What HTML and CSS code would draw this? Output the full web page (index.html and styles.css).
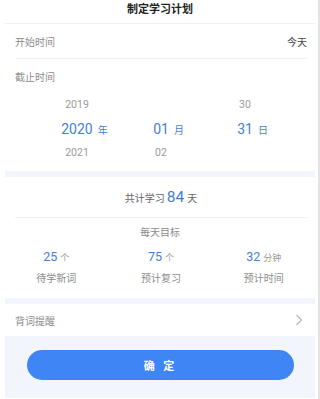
FILE: index.html
```html
<!DOCTYPE html>
<html lang="zh-CN">
<head>
    <meta charset="UTF-8">
    <meta name="viewport" content="width=device-width, initial-scale=1.0">
    <title>制定学习计划</title>
    <link rel="stylesheet" href="styles.css">
</head>
<body>
    <div class="page">
        <header class="title">制定学习计划</header>

        <div class="row row-start">
            <span class="label">开始时间</span>
            <span class="value">今天</span>
        </div>
        <div class="row row-end">
            <span class="label">截止时间</span>
        </div>

        <div class="picker">
            <div class="picker-row r1">
                <span class="cell">2019</span>
                <span class="cell"></span>
                <span class="cell">30</span>
            </div>
            <div class="picker-row r2">
                <span class="cell on">2020<em>年</em></span>
                <span class="cell on">01<em>月</em></span>
                <span class="cell on">31<em>日</em></span>
            </div>
            <div class="picker-row r3">
                <span class="cell">2021</span>
                <span class="cell">02</span>
                <span class="cell"></span>
            </div>
        </div>

        <div class="band"></div>

        <div class="total">共计学习<b>84</b>天</div>
        <div class="goal-title">每天目标</div>
        <div class="goals">
            <div class="goal">
                <div class="num">25<em>个</em></div>
                <div class="name">待学新词</div>
            </div>
            <div class="goal">
                <div class="num">75<em>个</em></div>
                <div class="name">预计复习</div>
            </div>
            <div class="goal">
                <div class="num">32<em>分钟</em></div>
                <div class="name">预计时间</div>
            </div>
        </div>

        <div class="band"></div>

        <div class="row row-remind">
            <span class="label">背词提醒</span>
            <svg class="chevron" width="8" height="12" viewBox="0 0 8 12">
                <path d="M1.5 1l5 5-5 5" fill="none" stroke="#b5b5b5" stroke-width="1.1"/>
            </svg>
        </div>

        <div class="footer">
            <button class="ok">确 定</button>
        </div>
    </div>
</body>
</html>
```

FILE: styles.css
```css
* {
    padding: 0;
    margin: 0;
    box-sizing: border-box;
    font-family: Roboto, "Noto Sans CJK SC", sans-serif;
}
body {
    background-color: #fff;
    width: 320px;
    height: 399px;
    border-right: 2px solid #e4e4e4;
    overflow: hidden;
}
.page {
    margin: 0 3px 0 5px;
}
.title {
    height: 24px;
    line-height: 20px;
    text-align: center;
    font-size: 11px;
    font-weight: bold;
    color: #222;
    border-bottom: 1px solid #f0f0f0;
}
.row {
    display: flex;
    align-items: center;
    justify-content: space-between;
    margin: 0 8px 0 10px;
}
.row-start {
    height: 35px;
    border-bottom: 1px solid #f0f0f0;
}
.row-end {
    height: 34px;
}
.label {
    font-size: 10px;
    color: #8c8c8c;
}
.value {
    font-size: 10px;
    color: #444;
}

.picker-row {
    display: flex;
    padding-left: 30px;
}
.picker-row .cell {
    width: 84px;
    text-align: center;
    font-size: 10.5px;
    color: #9a9a9a;
}
.r1 { height: 24px; line-height: 24px; }
.r2 { height: 25px; line-height: 25px; }
.r3 { height: 22px; line-height: 22px; margin-bottom: 7px; }
.picker-row .on {
    font-size: 14px;
    color: #3f7fd8;
    padding-left: 15px;
}
.picker-row .on em {
    font-style: normal;
    font-size: 10px;
    margin-left: 5px;
}

.band {
    height: 6px;
    background-color: #f2f5fc;
}

.total {
    height: 41px;
    display: flex;
    align-items: center;
    justify-content: center;
    font-size: 10px;
    color: #666;
    margin: 0 8px 0 10px;
    border-bottom: 1px solid #f0f0f0;
}
.total b {
    font-weight: normal;
    font-size: 15.5px;
    color: #3f7fd8;
    margin: 0 3px 0 2px;
}
.goal-title {
    height: 30px;
    line-height: 30px;
    text-align: center;
    font-size: 10px;
    color: #8c8c8c;
}
.goals {
    display: flex;
    padding-bottom: 7px;
}
.goal {
    flex: 1;
    text-align: center;
}
.goal:first-child {
    margin-right: 2px;
}
.num {
    height: 18px;
    line-height: 18px;
    font-size: 12.5px;
    color: #3f7fd8;
}
.num em {
    font-style: normal;
    font-size: 9px;
    color: #999;
    margin-left: 3px;
}
.name {
    margin-top: 1px;
    height: 24px;
    line-height: 24px;
    font-size: 10px;
    color: #8c8c8c;
}

.row-remind {
    height: 32px;
}
.chevron {
    margin-right: 4px;
}

.footer {
    background-color: #f2f5fc;
    height: 62px;
    padding: 14px 21px 0 22px;
}
.ok {
    width: 100%;
    height: 30px;
    border: none;
    border-radius: 15px;
    background-color: #3f86f4;
    color: #fff;
    font-size: 11px;
    font-weight: bold;
    letter-spacing: 3px;
}
```
